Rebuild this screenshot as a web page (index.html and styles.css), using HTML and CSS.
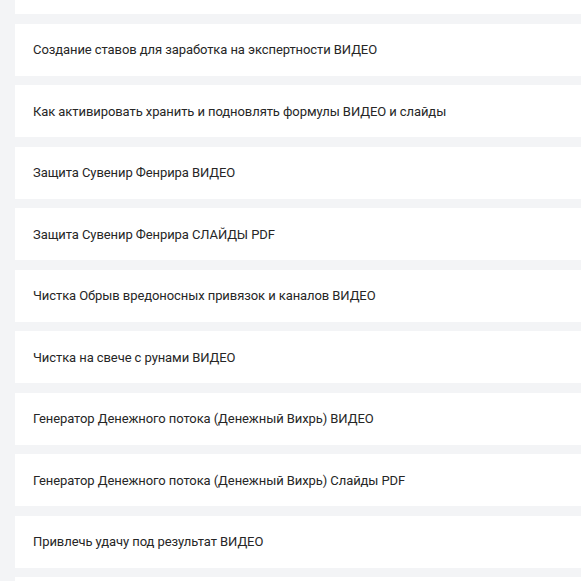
FILE: index.html
```html
<!DOCTYPE html>
<html lang="ru">
<head>
<meta charset="utf-8">
<link rel="stylesheet" href="styles.css">
</head>
<body>
<div class="list">
  <div class="item"><span class="title">Урок</span></div>
  <div class="item"><span class="title">Создание ставов для заработка на экспертности ВИДЕО</span></div>
  <div class="item"><span class="title">Как активировать хранить и подновлять формулы ВИДЕО и слайды</span></div>
  <div class="item"><span class="title">Защита Сувенир Фенрира ВИДЕО</span></div>
  <div class="item"><span class="title">Защита Сувенир Фенрира СЛАЙДЫ PDF</span></div>
  <div class="item"><span class="title">Чистка Обрыв вредоносных привязок и каналов ВИДЕО</span></div>
  <div class="item"><span class="title">Чистка на свече с рунами ВИДЕО</span></div>
  <div class="item"><span class="title">Генератор Денежного потока (Денежный Вихрь) ВИДЕО</span></div>
  <div class="item"><span class="title">Генератор Денежного потока (Денежный Вихрь) Слайды PDF</span></div>
  <div class="item"><span class="title">Привлечь удачу под результат ВИДЕО</span></div>
  <div class="item"><span class="title">Урок</span></div>
</div>
</body>
</html>
```

FILE: styles.css
```css
html, body {
  margin: 0;
  padding: 0;
  background: #f3f4f6;
  height: 581px;
  overflow: hidden;
}
.list {
  display: flex;
  flex-direction: column;
  gap: 9.5px;
  padding-left: 15px;
  margin-top: -38px;
}
.item {
  background: #ffffff;
  height: 52px;
  display: flex;
  align-items: center;
  padding-left: 18px;
  font-family: Roboto, "Noto Sans", sans-serif;
  font-size: 13px;
  letter-spacing: -0.08px;
  color: #262626;
}
.item:first-child .title,
.item:last-child .title {
  visibility: hidden;
}
```
